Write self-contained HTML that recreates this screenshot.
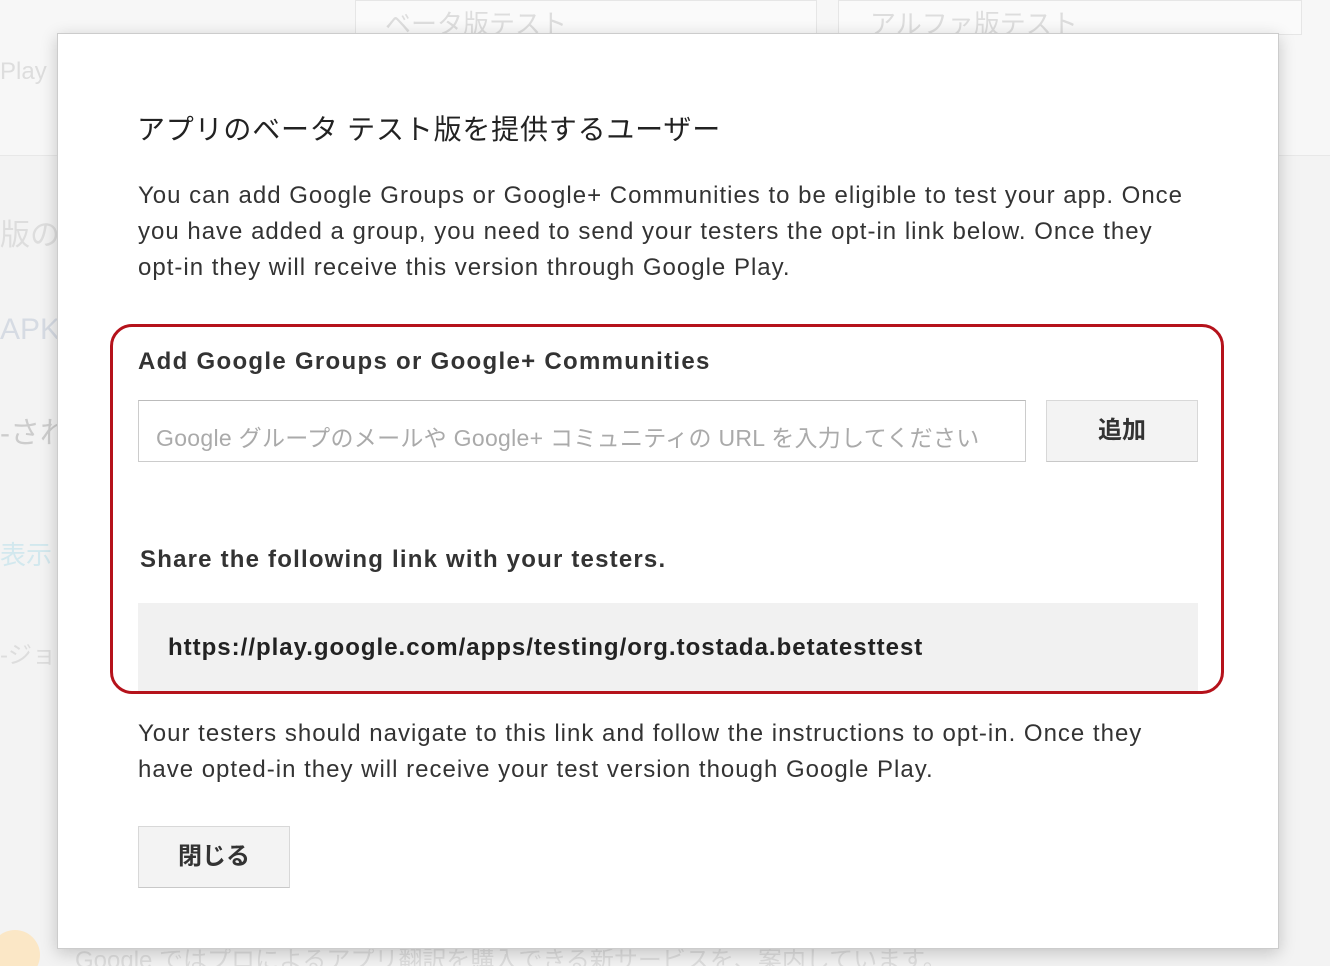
<!DOCTYPE html>
<html><head><meta charset="utf-8"><style>
html,body{margin:0;width:1330px;height:966px;overflow:hidden}
body{background:#f3f3f3;position:relative;font-family:"Liberation Sans","Noto Sans CJK JP",sans-serif;}
.bg{position:absolute;color:#ddd;font-size:26px;white-space:nowrap}
.modal{position:absolute;left:57px;top:33px;width:1220px;height:914px;background:#fff;border:1px solid #ccc;box-shadow:0 4px 16px rgba(0,0,0,.2);}
.t{position:absolute;white-space:nowrap;color:#333}
.btn{position:absolute;background:#f3f3f3;border:1px solid #d8d8d8;border-bottom-color:#c8c8c8;font-weight:bold;font-size:24px;color:#333;text-align:center;box-sizing:border-box}
</style></head><body>
<div style="position:absolute;left:0;top:0;width:1330px;height:155px;background:#f7f7f7;border-bottom:1px solid #e8e8e8"></div>
<div style="position:absolute;left:355px;top:0;width:460px;height:33px;background:#fafafa;border:1px solid #e6e6e6"></div>
<div style="position:absolute;left:838px;top:0;width:462px;height:33px;background:#fafafa;border:1px solid #e6e6e6"></div>
<div class="bg" style="left:385px;top:4px">ベータ版テスト</div>
<div class="bg" style="left:870px;top:4px">アルファ版テスト</div>
<div class="bg" style="left:0;top:58px;font-size:24px">Play</div>
<div class="bg" style="left:0;top:210px;font-size:30px">版の</div>
<div class="bg" style="left:0;top:313px;font-size:30px;color:#d6dbe3">APK</div>
<div class="bg" style="left:0;top:408px;font-size:30px;color:#ccc">-され</div>
<div class="bg" style="left:0;top:535px;font-size:26px;color:#d2e8ee">表示</div>
<div class="bg" style="left:0;top:635px;font-size:24px">-ジョン</div>
<div class="bg" style="left:75px;top:940px;font-size:24px">Google ではプロによるアプリ翻訳を購入できる新サービスを、案内しています。</div>
<div style="position:absolute;left:-10px;top:930px;width:50px;height:50px;border-radius:50%;background:#fbe7c6"></div>
<div class="modal"></div>
<div class="t" style="left:137px;top:108px;font-size:28px;color:#222;letter-spacing:0.8px">アプリのベータ テスト版を提供するユーザー</div>
<div class="t" style="left:138px;top:178px;font-size:24px;line-height:36px;color:#333;letter-spacing:1px">You can add Google Groups or Google+ Communities to be eligible to test your app. Once<br>you have added a group, you need to send your testers the opt-in link below. Once they<br>opt-in they will receive this version through Google Play.</div>
<div style="position:absolute;left:110px;top:324px;width:1114px;height:370px;box-sizing:border-box;border:3px solid #b5121b;border-radius:22px"></div>
<div class="t" style="left:138px;top:348px;font-size:24px;font-weight:bold;letter-spacing:1.3px">Add Google Groups or Google+ Communities</div>
<div style="position:absolute;left:138px;top:400px;width:888px;height:62px;box-sizing:border-box;border:1px solid #ccc;border-top-color:#bbb"></div>
<div class="t" style="left:156px;top:419px;font-size:23px;color:#aaa;letter-spacing:0.3px">Google グループのメールや Google+ コミュニティの URL を入力してください</div>
<div class="btn" style="left:1046px;top:400px;width:152px;height:62px;line-height:60px">追加</div>
<div class="t" style="left:140px;top:546px;font-size:24px;font-weight:bold;letter-spacing:1.2px">Share the following link with your testers.</div>
<div style="position:absolute;left:138px;top:603px;width:1060px;height:88px;background:#f1f1f1"></div>
<div class="t" style="left:168px;top:634px;font-size:24px;font-weight:bold;color:#222;letter-spacing:1px">https://play.google.com/apps/testing/org.tostada.betatesttest</div>
<div class="t" style="left:138px;top:716px;font-size:24px;line-height:36px;letter-spacing:1px">Your testers should navigate to this link and follow the instructions to opt-in. Once they<br>have opted-in they will receive your test version though Google Play.</div>
<div class="btn" style="left:138px;top:826px;width:152px;height:62px;line-height:60px">閉じる</div>
</body></html>
